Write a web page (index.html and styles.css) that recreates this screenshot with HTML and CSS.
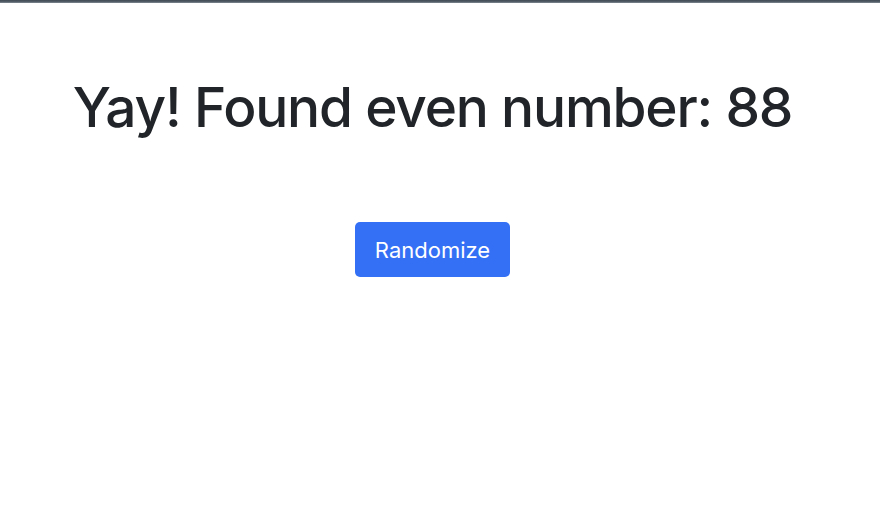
FILE: index.html
```html
<!DOCTYPE html>
<html lang="en">
<head>
<meta charset="UTF-8">
<meta name="viewport" content="width=device-width, initial-scale=1.0">
<title>Even number finder</title>
<link rel="stylesheet" href="styles.css">
</head>
<body>
<div class="topbar"></div>
<div class="contenedor">
    <h1 id="resultado">Yay! Found even number: 88</h1>
    <button type="button" id="randomize" class="btn-primary">Randomize</button>
</div>
</body>
</html>
```

FILE: styles.css
```css
body {
    font-family: Inter, 'Noto Sans', sans-serif;
    margin: 0;
    background-color: #fff;
    color: #212529;
}
.topbar {
    height: 3px;
    background: linear-gradient(#3f4a54, #56616b 66%, #8a939b);
}
.contenedor {
    display: flex;
    flex-direction: column;
    align-items: center;
    padding-right: 15px;
}
h1 {
    font-size: 55px;
    font-weight: 520;
    line-height: 1.2;
    margin: 71px 0 0;
    letter-spacing: -1.2px;
}
.btn-primary {
    margin-top: 82px;
    padding: 0 20px;
    height: 55px;
    background: #3370f5;
    color: white;
    border: none;
    border-radius: 5px;
    font-family: inherit;
    font-size: 22px;
    cursor: pointer;
}
.btn-primary:hover {
    background: #2a62dc;
}
```
